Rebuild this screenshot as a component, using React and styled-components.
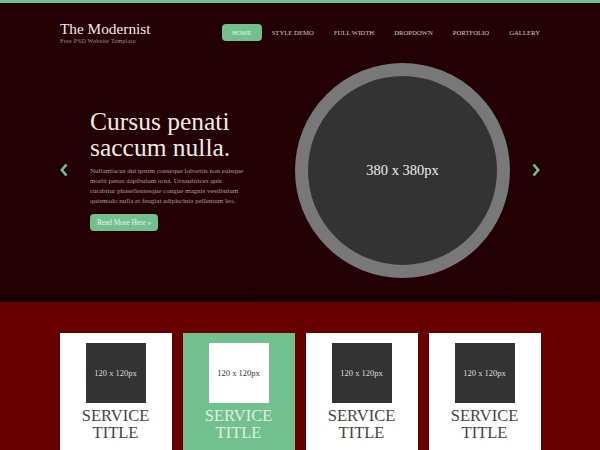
import React from 'react';
import styled, { createGlobalStyle } from 'styled-components';

const GlobalStyle = createGlobalStyle`
    html, body {
        margin: 0;
        padding: 0;
        background: #220003;
        font-family: "Liberation Serif", "DejaVu Serif", serif;
    }
`;

const green = '#72c08e';

const TopBar = styled.div`
    height: 3px;
    background: ${green};
`;

const Header = styled.header`
    width: 480px;
    margin: 0 auto;
    height: 50px;
    display: flex;
    align-items: flex-start;
    justify-content: space-between;
    padding-top: 18px;
    box-sizing: border-box;
`;

const Logo = styled.div`
    display: flex;
    flex-direction: column;
`;

const LogoTitle = styled.h1`
    margin: 0;
    font-size: 15.3px;
    font-weight: 400;
    line-height: 16px;
    color: #f2ebe6;
`;

const LogoTag = styled.span`
    font-size: 6.3px;
    line-height: 7px;
    color: #a38d8d;
    letter-spacing: 0.2px;
`;

const Nav = styled.nav`
    display: flex;
    align-items: center;
    margin-top: 3px;
    margin-right: -10px;
`;

const NavItem = styled.a`
    display: block;
    padding: 0 10px;
    height: 17px;
    line-height: 17px;
    border-radius: 4px;
    font-size: 6.7px;
    color: ${({ $active }) => ($active ? '#e4f2e8' : '#d8c8c8')};
    background: ${({ $active }) => ($active ? green : 'transparent')};
    text-transform: uppercase;
    text-decoration: none;
    cursor: pointer;
`;

const Hero = styled.section`
    height: 249px;
    padding-top: 9px;
    box-sizing: border-box;
    background: linear-gradient(to bottom, #220003 0, #220003 235px, #130001 249px);
`;

const HeroRow = styled.div`
    width: 480px;
    margin: 0 auto;
    height: 216px;
    display: flex;
    align-items: center;
`;

const Arrow = styled.button`
    width: 8px;
    height: 14px;
    padding: 0;
    border: 0;
    background: none;
    display: flex;
    cursor: pointer;
    margin-left: ${({ $ml }) => $ml || 0}px;
`;

const HeroText = styled.div`
    width: 165px;
    margin-left: 22px;
    display: flex;
    flex-direction: column;
    align-items: flex-start;
`;

const HeroTitle = styled.h2`
    margin: 0;
    font-size: 25.5px;
    font-weight: 400;
    line-height: 25.5px;
    color: #f3ece6;
`;

const HeroPara = styled.p`
    margin: 7px 0 0;
    font-size: 7px;
    line-height: 9.8px;
    color: #b39c9c;
    white-space: nowrap;
`;

const ReadMore = styled.a`
    margin-top: 7px;
    display: block;
    height: 17px;
    line-height: 17px;
    padding: 0 7px;
    border-radius: 4px;
    background: ${green};
    color: #e8f4ea;
    font-size: 7.3px;
    text-decoration: none;
`;

const Circle = styled.div`
    width: 215px;
    height: 215px;
    margin-left: 40px;
    border-radius: 50%;
    background: #333333;
    border: 13px solid #787878;
    box-sizing: border-box;
    display: flex;
    align-items: center;
    justify-content: center;
    color: #eeeeee;
    font-size: 14.5px;
`;

const Services = styled.section`
    background: #680000;
    padding-top: 31px;
    height: 148px;
    box-sizing: border-box;
    overflow: hidden;
`;

const ServiceGrid = styled.div`
    width: 481px;
    margin: 0 auto;
    display: grid;
    grid-template-columns: repeat(4, 112px);
    gap: 11px;
`;

const Card = styled.div`
    background: ${({ $active }) => ($active ? green : '#ffffff')};
    height: 140px;
    padding-top: 10px;
    box-sizing: border-box;
    display: flex;
    flex-direction: column;
    align-items: center;
`;

const Thumb = styled.div`
    width: 60px;
    height: 60px;
    background: ${({ $active }) => ($active ? '#ffffff' : '#333333')};
    color: ${({ $active }) => ($active ? '#333333' : '#dddddd')};
    font-size: 8.5px;
    display: flex;
    align-items: center;
    justify-content: center;
`;

const CardTitle = styled.h3`
    margin: 5px 0 0;
    font-size: 16.5px;
    font-weight: 400;
    line-height: 16.5px;
    text-align: center;
    color: ${({ $active }) => ($active ? '#dcf2e0' : '#444444')};
`;

const Chevron = ({ dir }) => (
    <svg width="8" height="14" viewBox="0 0 8 14">
        <polyline
            points={dir === 'left' ? '6.5,1.5 1.8,7 6.5,12.5' : '1.5,1.5 6.2,7 1.5,12.5'}
            fill="none"
            stroke={green}
            strokeWidth="2.6"
        />
    </svg>
);

const navItems = ['Home', 'Style Demo', 'Full Width', 'Dropdown', 'Portfolio', 'Gallery'];

const App = () => (
    <>
        <GlobalStyle />
        <TopBar />
        <Header>
            <Logo>
                <LogoTitle>The Modernist</LogoTitle>
                <LogoTag>Free PSD Website Template</LogoTag>
            </Logo>
            <Nav>
                {navItems.map((item, i) => (
                    <NavItem key={item} $active={i === 0}>{item}</NavItem>
                ))}
            </Nav>
        </Header>
        <Hero>
            <HeroRow>
                <Arrow aria-label="Previous"><Chevron dir="left" /></Arrow>
                <HeroText>
                    <HeroTitle>Cursus penati<br />saccum nulla.</HeroTitle>
                    <HeroPara>
                        Nullamlacus dui ipsum conseque loborttis non euisque<br />
                        morbi penas dapibulum orna. Urnaultrices quis<br />
                        curabitur phasellentesque congue magnis vestibulum<br />
                        quismodo nulla et feugiat adipiscinia pellentum leo.
                    </HeroPara>
                    <ReadMore>Read More Here »</ReadMore>
                </HeroText>
                <Circle>380 x 380px</Circle>
                <Arrow $ml={22} aria-label="Next"><Chevron dir="right" /></Arrow>
            </HeroRow>
        </Hero>
        <Services>
            <ServiceGrid>
                {[0, 1, 2, 3].map((i) => (
                    <Card key={i} $active={i === 1}>
                        <Thumb $active={i === 1}>120 x 120px</Thumb>
                        <CardTitle $active={i === 1}>SERVICE<br />TITLE</CardTitle>
                    </Card>
                ))}
            </ServiceGrid>
        </Services>
    </>
);

export default App;
